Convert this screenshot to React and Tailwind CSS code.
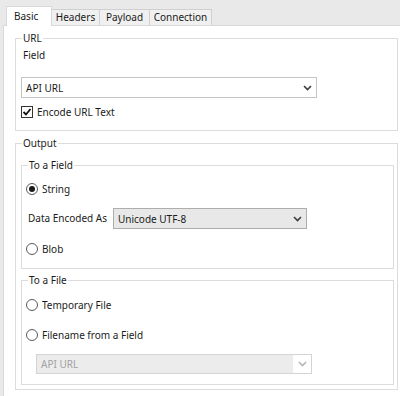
import React from "react";

function Chevron({ color = "#3c3c3c" }) {
  return (
    <svg width="9" height="6" viewBox="0 0 9 6" className="shrink-0">
      <polyline points="1,1 4.5,4.5 8,1" fill="none" stroke={color} strokeWidth="1.6" />
    </svg>
  );
}

function Dropdown({ value, className, disabled, gray }) {
  return (
    <div
      className={
        "flex items-center border " +
        (disabled
          ? "border-[#d4d4d4] bg-[#ececec] text-[#a2a2a2] "
          : gray
          ? "border-[#adadad] bg-[#e8e8e8] "
          : "border-[#c4c4c4] bg-white ") +
        className
      }
    >
      <span className="flex-1 whitespace-nowrap pl-[4px] leading-none">{value}</span>
      <div
        className={
          "flex h-full w-[18px] items-center justify-center " +
          (disabled ? "bg-white" : "")
        }
      >
        <Chevron color={disabled ? "#b5b5b5" : "#3c3c3c"} />
      </div>
    </div>
  );
}

function Radio({ checked, label }) {
  return (
    <div className="flex h-[16px] items-center">
      <div className="ml-[-1px] flex h-[12px] w-[12px] items-center justify-center rounded-full border border-[#5a5a5a] bg-white">
        {checked && <div className="h-[6px] w-[6px] rounded-full bg-[#1a1a1a]" />}
      </div>
      <span className="ml-[4px] whitespace-nowrap">{label}</span>
    </div>
  );
}

function Group({ title, className, children }) {
  return (
    <fieldset className={"border border-[#dcdcdc] px-0 " + className}>
      <legend className="ml-[6px] px-[1px] leading-[16px]">{title}</legend>
      {children}
    </fieldset>
  );
}

const tabs = [
  { name: "Basic", w: "w-[46px]" },
  { name: "Headers", w: "w-[48px]" },
  { name: "Payload", w: "w-[50px]" },
  { name: "Connection", w: "w-[62px]" },
];

export default function App() {
  return (
    <div
      className="flex h-[396px] w-[400px] flex-col overflow-hidden bg-[#e9e9e9] text-[10px] text-[#1a1a1a]"
      style={{ fontFamily: '"Noto Sans", "Open Sans", sans-serif' }}
    >
      {/* tab strip */}
      <div className="flex h-[25px] shrink-0 items-end pl-[6px]">
        {tabs.map((t, i) =>
          i === 0 ? (
            <div
              key={t.name}
              className={
                "relative z-10 -mb-px flex h-[20px] items-center border border-b-0 border-[#d9d9d9] bg-white pl-[7px] " +
                t.w
              }
            >
              {t.name}
            </div>
          ) : (
            <div
              key={t.name}
              className={
                "flex h-[16px] items-center justify-center whitespace-nowrap border border-b-0 border-l-0 border-[#d0d0d0] bg-[#f0f0f0] " +
                t.w
              }
            >
              {t.name}
            </div>
          )
        )}
      </div>

      {/* tab page */}
      <div className="ml-[3px] flex-1 border-l border-t border-[#d9d9d9] bg-white pl-[11px]">
        <Group title="URL" className="mt-[4px] w-[383px]">
          <div className="pl-[5px] pb-[10px]">
            <div className="mt-[1px] h-[16px] pl-[2px] leading-[16px]">Field</div>
            <Dropdown value="API URL" className="mt-[14px] h-[21px] w-[296px]" />
            <div className="mt-[6px] flex h-[16px] items-center">
              <div className="flex h-[12px] w-[12px] items-center justify-center border border-[#333333] bg-white">
                <svg width="10" height="10" viewBox="0 0 10 10">
                  <polyline points="1.5,5 4,7.5 8.5,2" fill="none" stroke="#111111" strokeWidth="1.8" />
                </svg>
              </div>
              <span className="ml-[4px]">Encode URL Text</span>
            </div>
          </div>
        </Group>

        <Group title="Output" className="mt-[4px] w-[383px]">
          <div className="pl-[5px] pb-[4px]">
            <Group title="To a Field" className="mt-[6px] w-[373px]">
              <div className="pl-[5px] pb-[11px]">
                <div className="mt-[8px]">
                  <Radio checked label="String" />
                </div>
                <div className="mt-[11px] flex items-center">
                  <span className="w-[86px] whitespace-nowrap pl-[1px]">Data Encoded As</span>
                  <Dropdown value="Unicode UTF-8" gray className="h-[21px] w-[194px]" />
                </div>
                <div className="mt-[12px]">
                  <Radio label="Blob" />
                </div>
              </div>
            </Group>

            <Group title="To a File" className="mt-[3px] w-[373px]">
              <div className="pl-[5px] pb-[10px]">
                <div className="mt-[9px]">
                  <Radio label="Temporary File" />
                </div>
                <div className="mt-[14px]">
                  <Radio label="Filename from a Field" />
                </div>
                <Dropdown
                  value="API URL"
                  disabled
                  className="ml-[9px] mt-[11px] h-[20px] w-[276px]"
                />
              </div>
            </Group>
          </div>
        </Group>
      </div>
    </div>
  );
}
